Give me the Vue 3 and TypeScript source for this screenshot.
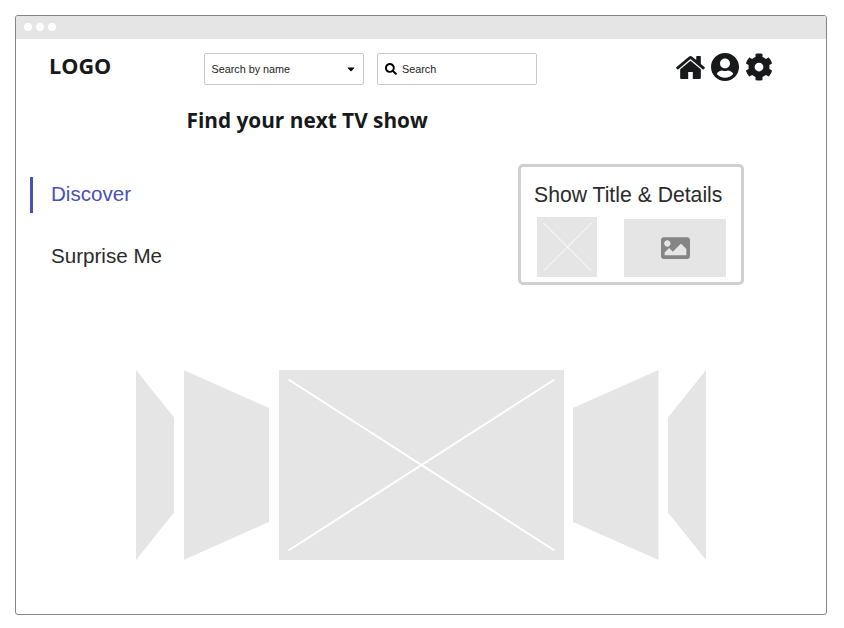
<script setup lang="ts">
import { ref } from 'vue'

interface NavItem {
  id: string
  label: string
}

const navItems: NavItem[] = [
  { id: 'discover', label: 'Discover' },
  { id: 'surprise', label: 'Surprise Me' },
]
const active = ref('discover')
</script>

<template>
  <div class="window">
    <div class="titlebar">
      <span v-for="n in 3" :key="n" class="dot"></span>
    </div>

    <header class="header">
      <div class="logo">LOGO</div>
      <div class="field select">
        <span>Search by name</span>
        <svg class="caret" viewBox="0 0 8 5"><path d="M0.9 0.4h6.200q.6.300.1.800L4.500 4.100q-.5.400-1 0L.8 1.200q-.5-.5.1-.8z" /></svg>
      </div>
      <div class="field search">
        <svg class="glass" viewBox="0 0 512 512"><path d="M505 442.7L405.3 343c-4.500-4.500-10.600-7-17-7H372c27.600-35.300 44-79.700 44-128C416 93.100 322.900 0 208 0S0 93.100 0 208s93.100 208 208 208c48.300 0 92.700-16.400 128-44v16.300c0 6.400 2.500 12.500 7 17l99.700 99.700c9.400 9.400 24.600 9.400 33.900 0l28.300-28.300c9.400-9.400 9.400-24.600.1-34zM208 336c-70.700 0-128-57.200-128-128 0-70.700 57.200-128 128-128 70.700 0 128 57.200 128 128 0 70.700-57.200 128-128 128z" /></svg>
        <span>Search</span>
      </div>
      <nav class="actions">
        <svg class="home" viewBox="89 253 1614 1283"><path d="M1472 992v480q0 26-19 45t-45 19h-384v-384h-256v384h-384q-26 0-45-19t-19-45v-480q0-1 .5-3t.5-3l575-474 575 474q1 2 1 6zm223-69l-62 74q-8 9-21 11h-3q-13 0-21-7l-692-577-692 577q-12 8-24 7-13-2-21-11l-62-74q-8-10-7-23.500t11-21.500l719-599q32-26 76-26t76 26l244 204v-195q0-14 9-23t23-9h192q14 0 23 9t9 23v408l219 182q10 8 11 21.500t-7 23.500z" /></svg>
        <svg class="user" viewBox="0 8 496 496"><path d="M248 8C111 8 0 119 0 256s111 248 248 248 248-111 248-248S385 8 248 8zm0 96c48.600 0 88 39.400 88 88s-39.400 88-88 88-88-39.400-88-88 39.400-88 88-88zm0 344c-58.700 0-111.300-26.600-146.500-68.200 18.800-35.400 55.600-59.800 98.500-59.800 2.400 0 4.800.4 7.100 1.100 13 4.200 26.600 6.900 40.900 6.900 14.300 0 28-2.700 40.900-6.900 2.300-.7 4.700-1.100 7.100-1.100 42.900 0 79.700 24.400 98.500 59.800C359.300 421.400 306.700 448 248 448z" /></svg>
        <svg class="cog" viewBox="0 0 512 512"><path d="M487.400 315.700l-42.600-24.600c4.300-23.200 4.300-47 0-70.200l42.600-24.600c4.900-2.800 7.100-8.600 5.500-14-11.100-35.600-30-67.800-54.700-94.600-3.800-4.100-10-5.100-14.800-2.300L380.800 110c-17.900-15.400-38.500-27.300-60.800-35.100V25.800c0-5.600-3.900-10.500-9.400-11.700-36.700-8.200-74.300-7.800-109.200 0-5.500 1.200-9.400 6.100-9.400 11.700V75c-22.200 7.900-42.800 19.800-60.800 35.100L88.700 85.500c-4.900-2.800-11-1.900-14.800 2.300-24.700 26.700-43.600 58.900-54.700 94.600-1.700 5.400.6 11.200 5.500 14L67.300 221c-4.300 23.200-4.300 47 0 70.200l-42.600 24.600c-4.900 2.800-7.100 8.600-5.500 14 11.100 35.600 30 67.800 54.700 94.600 3.800 4.100 10 5.100 14.800 2.300l42.600-24.600c17.900 15.400 38.500 27.300 60.800 35.100v49.200c0 5.600 3.900 10.500 9.400 11.700 36.700 8.200 74.300 7.800 109.200 0 5.500-1.200 9.400-6.100 9.400-11.700v-49.200c22.200-7.900 42.800-19.800 60.800-35.100l42.600 24.600c4.900 2.800 11 1.900 14.800-2.300 24.700-26.700 43.600-58.900 54.700-94.600 1.500-5.500-.7-11.300-5.600-14.100zM256 336c-44.100 0-80-35.900-80-80s35.900-80 80-80 80 35.900 80 80-35.900 80-80 80z" /></svg>
      </nav>
    </header>

    <h1 class="headline">Find your next TV show</h1>

    <section class="middle">
      <ul class="menu">
        <li
          v-for="item in navItems"
          :key="item.id"
          :class="{ active: item.id === active }"
          @click="active = item.id"
        >{{ item.label }}</li>
      </ul>
      <article class="card">
        <h2>Show Title &amp; Details</h2>
        <div class="media">
          <svg class="thumb" viewBox="0 0 60 60"><path d="M6.500 6L54.500 54M54.500 6L6.500 54" /></svg>
          <div class="picture">
            <svg viewBox="0 64 512 384"><path d="M464 448H48c-26.510 0-48-21.490-48-48V112c0-26.510 21.490-48 48-48h416c26.510 0 48 21.490 48 48v288c0 26.510-21.490 48-48 48zM112 120c-30.928 0-56 25.072-56 56s25.072 56 56 56 56-25.072 56-56-25.072-56-56-56zM64 384h384V272l-87.515-87.515c-4.686-4.686-12.284-4.686-16.971 0L208 320l-55.515-55.515c-4.686-4.686-12.284-4.686-16.971 0L64 336v48z" /></svg>
          </div>
        </div>
      </article>
    </section>

    <section class="carousel">
      <div class="slide far left"></div>
      <div class="slide near left"></div>
      <svg class="slide main" viewBox="0 0 285 190"><path d="M9.500 9.500L275.500 180.500M275.500 9.500L9.500 180.500" /></svg>
      <div class="slide near right"></div>
      <div class="slide far right"></div>
    </section>
  </div>
</template>

<style>
body {
  margin: 0;
  background: #fff;
}
</style>

<style scoped>
.window {
  box-sizing: border-box;
  width: 812px;
  height: 600px;
  margin: 15px 0 0 15px;
  border: 1px solid #858585;
  border-radius: 3px;
  overflow: hidden;
  background: #fff;
  color: #17191b;
  font-family: "Liberation Sans", Arial, sans-serif;
}
.titlebar {
  display: flex;
  align-items: center;
  gap: 4px;
  height: 22.500px;
  padding-left: 8px;
  background: #e5e5e5;
}
.dot {
  width: 8px;
  height: 8px;
  border-radius: 50%;
  background: #fff;
}
.header {
  display: flex;
  align-items: flex-start;
  height: 64.500px;
  box-sizing: border-box;
  padding: 14.500px 52px 0 33px;
}
.logo {
  width: 155px;
  font: 700 21.600px/25px "Open Sans", sans-serif;
}
.field {
  box-sizing: border-box;
  display: flex;
  align-items: center;
  width: 160px;
  height: 32px;
  border: 1px solid #c9c9c9;
  border-radius: 2px;
  font-size: 10.800px;
  color: #222;
}
.select {
  justify-content: space-between;
  padding: 0 8px 0 6.500px;
}
.caret {
  width: 8px;
  height: 5px;
  fill: #050520;
}
.search {
  gap: 5px;
  margin-left: 13px;
  padding-left: 7px;
}
.glass {
  width: 12px;
  height: 12px;
  fill: #000;
}
.actions {
  display: flex;
  align-items: center;
  height: 28px;
  margin-left: auto;
  fill: #17191b;
}
.home {
  width: 29px;
  height: 23px;
}
.user {
  width: 28px;
  height: 28px;
  margin-left: 6px;
}
.cog {
  width: 28px;
  height: 28px;
  margin: 0 1px 0 6px;
}
.headline {
  margin: 3px 0 0 170.500px;
  font: 700 20.800px/28px "Open Sans", sans-serif;
}
.middle {
  display: flex;
  align-items: flex-start;
  justify-content: space-between;
  height: 236px;
  box-sizing: border-box;
  padding: 30px 82px 0 14px;
}
.menu {
  display: flex;
  flex-direction: column;
  gap: 26px;
  margin: 13px 0 0;
  padding: 0;
  list-style: none;
  font-size: 20.600px;
  line-height: 33px;
  color: #2b2b2b;
}
.menu li {
  height: 36px;
  padding-left: 18px;
  border-left: 3px solid transparent;
  cursor: pointer;
}
.menu .active {
  color: #4a50b5;
  border-color: #4a50b5;
}
.card {
  box-sizing: border-box;
  width: 226px;
  height: 121px;
  padding: 15px 15px 0 13px;
  border: 3px solid #d0d0d0;
  border-radius: 5px;
}
.card h2 {
  margin: 0;
  font-size: 21.200px;
  font-weight: 400;
  line-height: 26px;
  color: #2b2b2b;
  white-space: nowrap;
}
.media {
  display: flex;
  align-items: flex-end;
  justify-content: space-between;
  height: 60px;
  margin: 9px 0 0 3px;
}
.thumb {
  width: 60px;
  height: 60px;
  background: #e5e5e5;
  fill: none;
  stroke: #fff;
  stroke-width: 1;
}
.picture {
  display: flex;
  align-items: center;
  justify-content: center;
  width: 102px;
  height: 58px;
  background: #e5e5e5;
}
.picture svg {
  width: 29px;
  height: 22px;
  fill: #858585;
}
.carousel {
  display: flex;
  justify-content: center;
  gap: 9.500px;
}
.slide {
  height: 190px;
  background: #e5e5e5;
}
.far {
  width: 38px;
}
.near {
  width: 85.500px;
}
.main {
  width: 285px;
  fill: none;
  stroke: #fff;
  stroke-width: 2;
}
.near.left {
  clip-path: polygon(0 0, 100% 20%, 100% 80%, 0 100%);
}
.near.right {
  clip-path: polygon(0 20%, 100% 0, 100% 100%, 0 80%);
}
.far.left {
  clip-path: polygon(0 0, 100% 25%, 100% 75%, 0 100%);
}
.far.right {
  clip-path: polygon(0 25%, 100% 0, 100% 100%, 0 75%);
}
</style>
